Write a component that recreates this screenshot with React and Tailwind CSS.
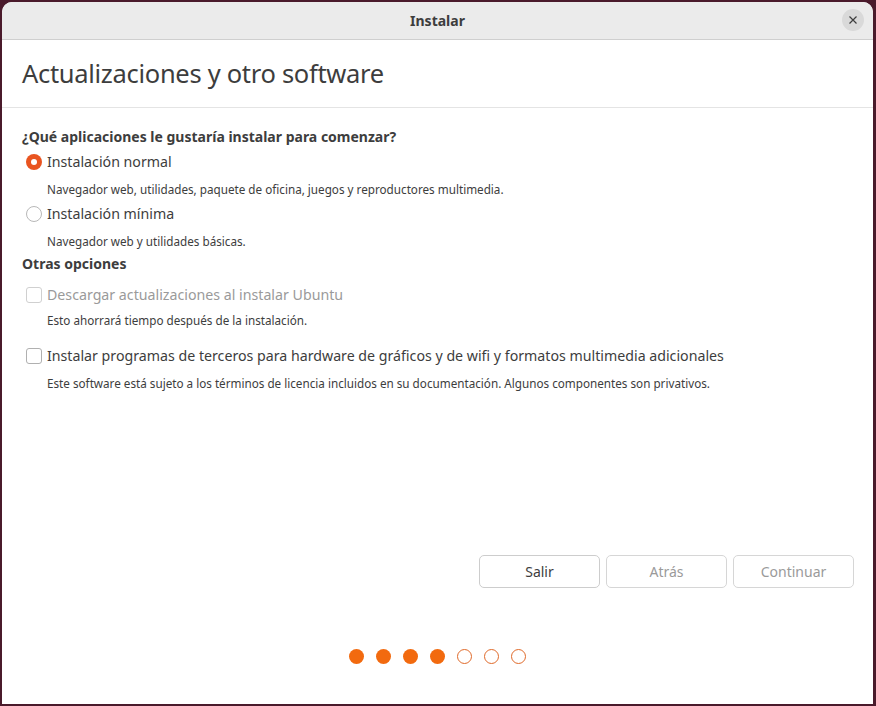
import React from 'react';

const FONT = { fontFamily: '"Noto Sans", "Open Sans", sans-serif' };

function Radio({ checked }) {
  return checked ? (
    <span className="w-[16px] h-[16px] rounded-full bg-[#e95420] flex items-center justify-center shrink-0">
      <span className="w-[6px] h-[6px] rounded-full bg-white" />
    </span>
  ) : (
    <span className="w-[16px] h-[16px] rounded-full border border-[#b8b8b8] bg-white shrink-0" />
  );
}

function Check({ disabled }) {
  return (
    <span
      className={`w-[16px] h-[16px] rounded-[3px] border bg-white shrink-0 ${
        disabled ? 'border-[#d0d0d0]' : 'border-[#b0b0b0]'
      }`}
    />
  );
}

const OPTIONS = [
  { kind: 'radio', checked: true, label: 'Instalación normal', desc: 'Navegador web, utilidades, paquete de oficina, juegos y reproductores multimedia.' },
  { kind: 'radio', checked: false, label: 'Instalación mínima', desc: 'Navegador web y utilidades básicas.' },
];

export default function App() {
  return (
    <div className="w-[876px] h-[706px] bg-[#4a1a2b] pt-[2px] pl-[2px] pr-[3px] pb-[2px] flex" style={FONT}>
      <div className="flex-1 flex flex-col bg-white rounded-t-[10px] overflow-hidden">
        {/* Title bar */}
        <div className="h-[38px] bg-[#ebebeb] border-b border-[#cfcfcf] flex items-center justify-center relative shrink-0">
          <span className="text-[14px] font-bold text-[#3d3d3d]">Instalar</span>
          <span className="absolute right-[9px] top-[7px] w-[22px] h-[22px] rounded-full bg-[#d9d9d9] flex items-center justify-center">
            <svg width="8" height="8" viewBox="0 0 8 8">
              <path d="M0.5 0.5L7.5 7.5M7.5 0.5L0.5 7.5" stroke="#3d3d3d" strokeWidth="1.2" />
            </svg>
          </span>
        </div>

        {/* Heading */}
        <div className="h-[68px] border-b border-[#e4e4e4] flex items-center px-[20px] shrink-0">
          <h1 className="text-[25.5px] text-[#3d3d3d] tracking-[-0.3px]">Actualizaciones y otro software</h1>
        </div>

        {/* Body */}
        <div className="flex-1 flex flex-col pl-[20px] pr-[19px] pt-[18px] text-[#3d3d3d]">
          <p className="text-[14px] font-bold leading-[22px]">¿Qué aplicaciones le gustaría instalar para comenzar?</p>
          {OPTIONS.map((o) => (
            <div key={o.label} className="flex flex-col">
              <div className="flex items-center gap-[5px] pl-[4px] h-[28px]">
                <Radio checked={o.checked} />
                <span className="text-[14.2px]">{o.label}</span>
              </div>
              <p className="text-[11.7px] pl-[25px] h-[24px] pt-[3px] leading-[20px]">{o.desc}</p>
            </div>
          ))}
          <p className="text-[14px] font-bold leading-[22px] mt-[1px]">Otras opciones</p>

          <div className="flex items-center gap-[5px] pl-[4px] h-[28px] mt-[6px]">
            <Check disabled />
            <span className="text-[14.2px] text-[#9a9a9a]">Descargar actualizaciones al instalar Ubuntu</span>
          </div>
          <p className="text-[11.7px] pl-[25px] leading-[22px]">Esto ahorrará tiempo después de la instalación.</p>

          <div className="flex items-center gap-[5px] pl-[4px] h-[28px] mt-[11px]">
            <Check />
            <span className="text-[14.2px]">Instalar programas de terceros para hardware de gráficos y de wifi y formatos multimedia adicionales</span>
          </div>
          <p className="text-[11.7px] pl-[25px] leading-[22px] mt-[2px]">Este software está sujeto a los términos de licencia incluidos en su documentación. Algunos componentes son privativos.</p>

          <div className="flex-1" />

          {/* Buttons */}
          <div className="flex justify-end gap-[6px]">
            <button className="w-[121px] h-[33px] rounded-[5px] border border-[#cdcdcd] bg-white text-[14px] text-[#3d3d3d]">Salir</button>
            <button className="w-[121px] h-[33px] rounded-[5px] border border-[#d6d6d6] bg-white text-[14px] text-[#9a9a9a]">Atrás</button>
            <button className="w-[121px] h-[33px] rounded-[5px] border border-[#d6d6d6] bg-white text-[14px] text-[#9a9a9a]">Continuar</button>
          </div>

          {/* Progress dots */}
          <div className="flex justify-center gap-[12px] mt-[61px] mb-[40px] pr-[1px]">
            {[0, 1, 2, 3, 4, 5, 6].map((i) =>
              i < 4 ? (
                <span key={i} className="w-[15px] h-[15px] rounded-full bg-[#f26a0f]" />
              ) : (
                <span key={i} className="w-[15px] h-[15px] rounded-full border border-[#e06a2a]" />
              )
            )}
          </div>
        </div>
      </div>
    </div>
  );
}
